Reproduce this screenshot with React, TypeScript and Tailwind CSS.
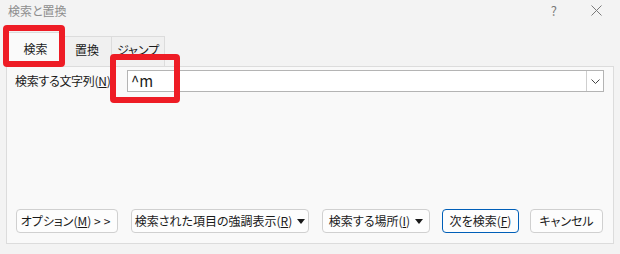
import React from "react";

function Caret() {
    return (
        <svg width="8" height="5" viewBox="0 0 8 5" className="ml-[5px]">
            <path d="M0 0 L8 0 L4 5 Z" fill="#1a1a1a" />
        </svg>
    );
}

function Btn({ children, className }: { children: React.ReactNode; className: string }) {
    return (
        <button className={`h-[24px] flex items-center justify-center rounded-[4px] border bg-[#fdfdfd] text-[12px] text-[#1a1a1a] ${className}`}>
            {children}
        </button>
    );
}

export default function App() {
    return (
        <div className="w-[620px] h-[254px] bg-[#f3f3f3] relative overflow-hidden flex flex-col font-['Noto_Sans_CJK_JP','Noto_Sans',sans-serif] [font-feature-settings:'palt']">
            {/* title bar */}
            <header className="h-[21px] flex items-center pl-[8px] text-[12px] text-[#8e8e8e]">
                <span>検索と置換</span>
                <span className="ml-auto mr-[34px] text-[13px] text-[#7a7a7a]">?</span>
                <svg width="11" height="11" viewBox="0 0 11 11" className="mr-[18px]">
                    <path d="M0.5 0.5 L10.5 10.5 M10.5 0.5 L0.5 10.5" stroke="#7a7a7a" strokeWidth="1" />
                </svg>
            </header>

            {/* tabs */}
            <nav className="h-[45px] flex items-end pl-[8px] text-[12px] text-[#1a1a1a] relative z-10">
                <div className="w-[55px] h-[35px] -mb-px flex items-center justify-center bg-[#fafafa] border border-b-0 border-[#dcdcdc] pb-[3px]">
                    検索
                </div>
                <div className="w-[49px] h-[30px] flex items-start pt-[4px] justify-center bg-[#f0f0f0] border border-l-0 border-b-0 border-[#dcdcdc]">
                    置換
                </div>
                <div className="w-[53px] h-[30px] flex items-start pt-[4px] justify-center bg-[#f0f0f0] border border-l-0 border-b-0 border-[#dcdcdc]">
                    ジャンプ
                </div>
            </nav>

            {/* panel */}
            <section className="mx-[6px] h-[178px] bg-[#f9f9f9] border border-[#dcdcdc] flex flex-col">
                <div className="mt-[3px] flex items-center h-[22px]">
                    <label className="w-[120px] pl-[8px] text-[12px] tracking-[-0.3px] text-[#1a1a1a] whitespace-nowrap">
                        検索する文字列(<span className="underline">N</span>)
                    </label>
                    <div className="w-[477px] h-[22px] flex border border-[#b4b4b4] bg-white">
                        <span className="flex-1 pl-[3px] text-[15px] leading-[20px] text-[#1a1a1a]">^m</span>
                        <div className="w-[17px] h-full border-l border-[#cfcfcf] flex items-center justify-center">
                            <svg width="9" height="5" viewBox="0 0 9 5">
                                <path d="M0.5 0.5 L4.5 4.5 L8.5 0.5" stroke="#444" strokeWidth="1" fill="none" />
                            </svg>
                        </div>
                    </div>
                </div>

                <div className="mt-auto mb-[10px] flex items-center pl-[9px]">
                    <Btn className="w-[102px] border-[#d0d0d0]">
                        オプション(<span className="underline">M</span>)&nbsp;<span className="tracking-[3px]">&gt;&gt;</span>
                    </Btn>
                    <Btn className="w-[178px] ml-[13px] border-[#d0d0d0]">
                        検索された項目の強調表示(<span className="underline">R</span>)<Caret />
                    </Btn>
                    <Btn className="w-[108px] ml-[13px] border-[#d0d0d0]">
                        検索する場所(<span className="underline">I</span>)<Caret />
                    </Btn>
                    <Btn className="w-[77px] ml-[12px] border-[#005fb8]">
                        次を検索(<span className="underline">F</span>)
                    </Btn>
                    <Btn className="w-[73px] ml-[11px] border-[#d0d0d0]">
                        キャンセル
                    </Btn>
                </div>
            </section>

            {/* red highlight boxes */}
            <div className="absolute left-[3px] top-[25px] w-[62px] h-[42px] border-[6px] border-[#ee1c25] rounded-[4px] z-20" />
            <div className="absolute left-[110px] top-[54px] w-[70px] h-[49px] border-[6px] border-[#ee1c25] rounded-[4px] z-20" />
        </div>
    );
}
